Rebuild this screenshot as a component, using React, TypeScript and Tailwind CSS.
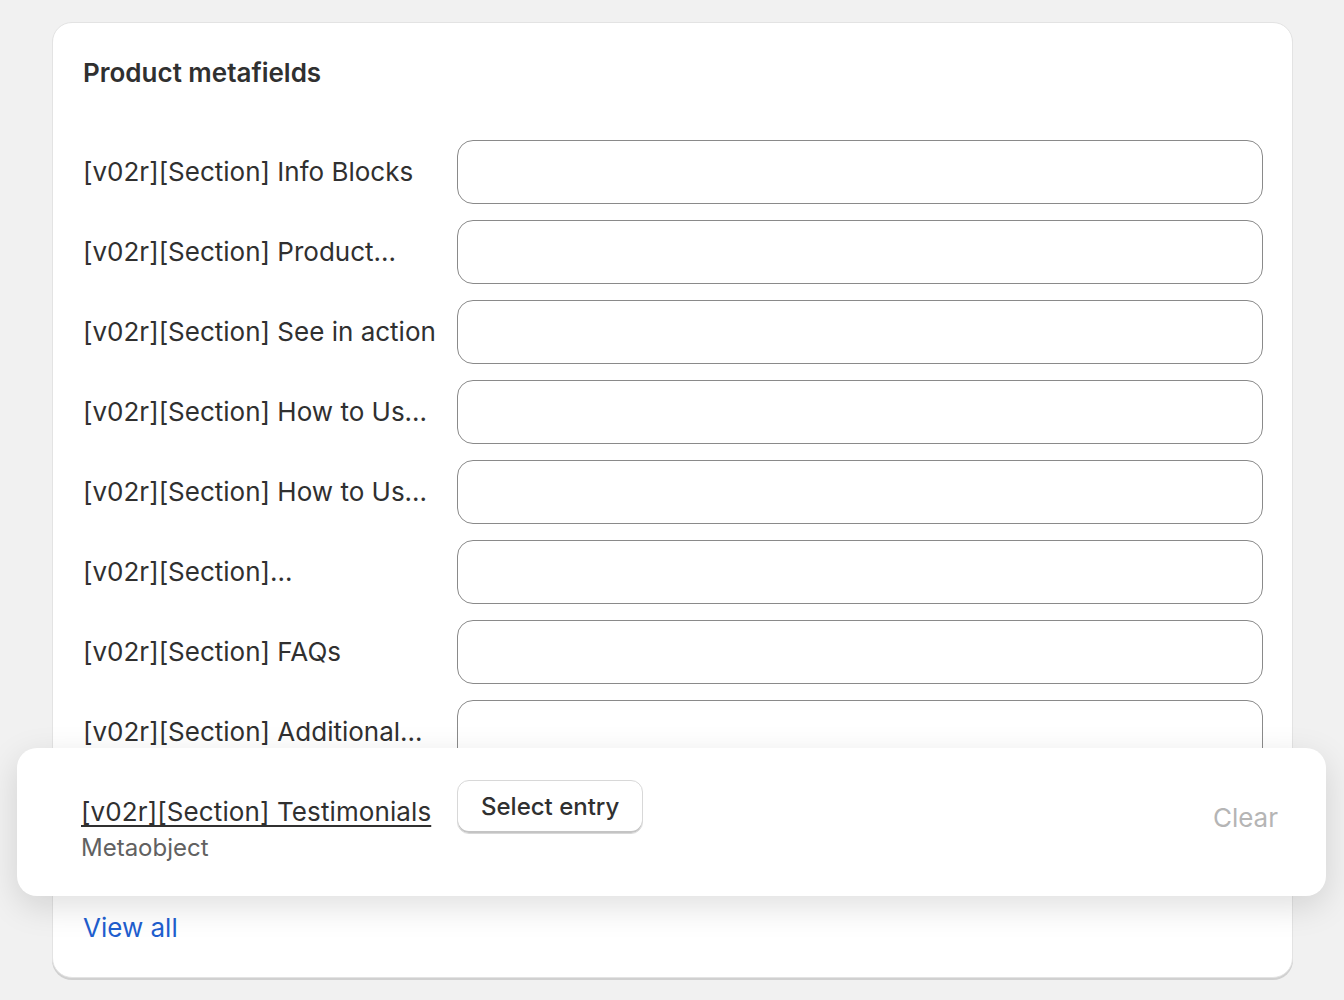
const rows = [
  "[v02r][Section] Info Blocks",
  "[v02r][Section] Product...",
  "[v02r][Section] See in action",
  "[v02r][Section] How to Us...",
  "[v02r][Section] How to Us...",
  "[v02r][Section]...",
  "[v02r][Section] FAQs",
  "[v02r][Section] Additional...",
  "[v02r][Section] Testimonials",
];

const MetafieldRow = ({ label }: { label: string }) => (
  <div className="flex items-center h-16">
    <div className="w-[374px] shrink-0 text-[26px] leading-9 text-[#303030] whitespace-nowrap">
      {label}
    </div>
    <div className="flex-1 h-16 rounded-2xl border border-[#8a8a8a] bg-white" />
  </div>
);

const DragPreview = () => (
  <div className="absolute left-[17px] top-[748px] w-[1309px] h-[148px] rounded-[20px] bg-white shadow-[0_10px_34px_rgba(0,0,0,0.13)] flex items-start pl-[64px] pr-[48px] pt-[32px]">
    <div className="w-[376px] shrink-0 pt-[14px]">
      <div className="text-[26px] leading-9 text-[#303030] underline decoration-[2px] underline-offset-[4px] whitespace-nowrap tracking-[0.1px]">
        [v02r][Section] Testimonials
      </div>
      <div className="text-[24px] leading-9 text-[#616161]">Metaobject</div>
    </div>
    <button className="h-[54px] px-[23px] rounded-xl border border-[#d8d8d8] bg-white text-[24px] font-medium text-[#303030] shadow-[inset_0_-2px_0_#c4c4c4]">
      Select entry
    </button>
    <div className="ml-auto pt-[20px] text-[26px] leading-9 text-[#b5b5b5]">Clear</div>
  </div>
);

export default function App() {
  return (
    <div
      className="relative h-[1000px] bg-[#f1f1f1] pt-[22px] pl-[52px]"
      style={{ fontFamily: "Inter, 'Noto Sans', sans-serif" }}
    >
      <div className="w-[1241px] h-[956px] rounded-[20px] bg-white border border-[#e3e3e3] shadow-[0_2px_0_#d0d0d0] pl-[30px] pr-[29px] pt-[32px]">
        <h2 className="text-[26px] leading-9 font-semibold text-[#303030]">Product metafields</h2>
        <div className="mt-[49px] flex flex-col gap-4">
          {rows.map((label, i) => (
            <MetafieldRow key={i} label={label} />
          ))}
        </div>
        <div className="mt-[66px] text-[26px] leading-9 text-[#1f5fcf]">View all</div>
      </div>
      <DragPreview />
    </div>
  );
}
